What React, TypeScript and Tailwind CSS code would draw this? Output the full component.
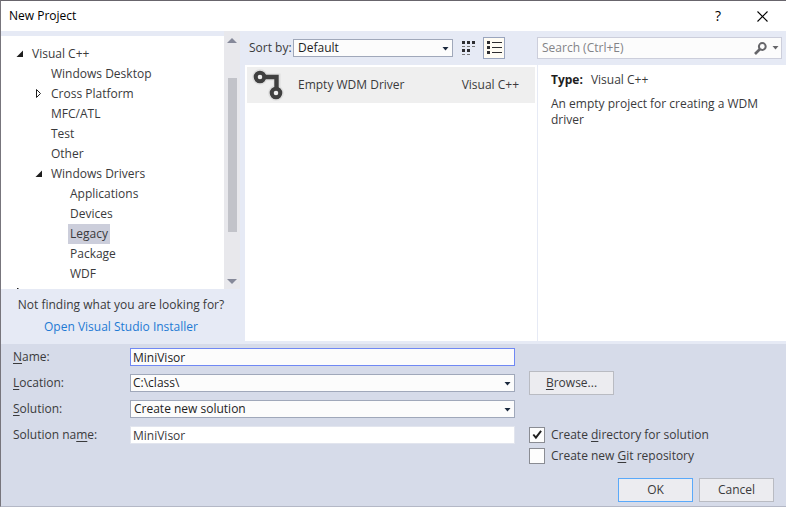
import React, { useState } from "react";

type Node = { label: string; depth: 0 | 1 | 2; state?: "open" | "closed" };

const nodes: Node[] = [
  { label: "Visual C++", depth: 0, state: "open" },
  { label: "Windows Desktop", depth: 1 },
  { label: "Cross Platform", depth: 1, state: "closed" },
  { label: "MFC/ATL", depth: 1 },
  { label: "Test", depth: 1 },
  { label: "Other", depth: 1 },
  { label: "Windows Drivers", depth: 1, state: "open" },
  { label: "Applications", depth: 2 },
  { label: "Devices", depth: 2 },
  { label: "Legacy", depth: 2 },
  { label: "Package", depth: 2 },
  { label: "WDF", depth: 2 },
];

const indent = { 0: "pl-[13px]", 1: "pl-8", 2: "pl-[51px]" };

function Expander({ state }: { state?: "open" | "closed" }) {
  return (
    <svg className="mr-1 h-3 w-3 shrink-0" viewBox="0 0 12 12" aria-hidden="true">
      {state === "open" && <path d="M9 2.5V9H2.5z" fill="#1e1e1e" />}
      {state === "closed" && (
        <path d="M3.5 1.5v8l4-4z" fill="#fff" stroke="#1e1e1e" strokeWidth="1" />
      )}
    </svg>
  );
}

function Caret({ className }: { className: string }) {
  return (
    <svg className={className} width="7" height="4" viewBox="0 0 7 4" aria-hidden="true">
      <path d="M0.5 0h6l-3 3.5z" fill="currentColor" />
    </svg>
  );
}

function Select({ id, options, label, pad }: { id: string; options: string[]; label?: string; pad: string }) {
  return (
    <div className="relative w-full">
      <select
        id={id}
        aria-label={label}
        className={`block h-[18px] w-full appearance-none border border-[#a0a8ba] bg-[#fcfcfc] pr-5 leading-4 text-[#1e1e1e] outline-none ${pad}`}
      >
        {options.map((o) => (
          <option key={o}>{o}</option>
        ))}
      </select>
      <Caret className="pointer-events-none absolute top-2 right-1 text-[#1b293e]" />
    </div>
  );
}

function Tree() {
  const [selected, setSelected] = useState("Legacy");
  return (
    <div className="flex h-[258px]">
      <ul role="tree" aria-label="Templates" className="mt-[5px] flex-1 overflow-hidden bg-white pt-2">
        {nodes.map((n) => (
          <li
            key={n.label}
            role="treeitem"
            aria-selected={n.label === selected}
            aria-expanded={n.state ? n.state === "open" : undefined}
            onClick={() => setSelected(n.label)}
            className={`flex h-5 items-center ${indent[n.depth]}`}
          >
            <Expander state={n.state} />
            <span className={`px-[2px] leading-5 ${n.label === selected ? "bg-[#cccedb]" : ""}`}>
              {n.label}
            </span>
          </li>
        ))}
        <li role="none" className="flex h-5 pt-1 pl-[13px]">
          <svg className="h-3 w-3" viewBox="0 0 12 12" aria-hidden="true">
            <path d="M3.5 0v8l4-4z" fill="#fff" stroke="#1e1e1e" />
          </svg>
        </li>
      </ul>
      <div className="flex w-4 flex-col items-center justify-between bg-[#e8e8ec] pt-[7px] pb-[5px]">
        <svg width="10" height="5" viewBox="0 0 10 5" aria-hidden="true">
          <path d="M0 5L5 0l5 5z" fill="#868999" />
        </svg>
        <div className="mt-[35px] mb-auto h-[154px] w-[9px] bg-[#c2c3c9]" />
        <svg width="10" height="5" viewBox="0 0 10 5" aria-hidden="true">
          <path d="M0 0h10L5 5z" fill="#868999" />
        </svg>
      </div>
    </div>
  );
}

function SmallIconsView() {
  const xs = [0, 5, 10];
  return (
    <svg width="14" height="15" viewBox="0 0 14 15" aria-hidden="true">
      {xs.map((x) => (
        <g key={x} fill="#2d2d30">
          <rect x={x} y="0" width="3" height="3" />
          <rect x={x} y="5" width="3" height="1" fill="#777" />
          {x < 10 && <rect x={x} y="8" width="3" height="3" />}
          {x < 10 && <rect x={x} y="13" width="3" height="1" fill="#777" />}
        </g>
      ))}
    </svg>
  );
}

function ListView() {
  return (
    <svg width="15" height="14" viewBox="0 0 15 14" aria-hidden="true">
      {[0, 5, 10].map((y) => (
        <g key={y} fill="#2d2d30">
          <rect x="0" y={y} width="3" height="3" />
          <rect x="5" y={y + 1} width="10" height="1" />
        </g>
      ))}
    </svg>
  );
}

function DriverIcon() {
  return (
    <svg width="32" height="32" viewBox="0 0 32 32" aria-hidden="true">
      <g fill="none" stroke="#dedede" strokeWidth="7">
        <path d="M10 8h15v12" />
        <circle cx="8" cy="8" r="4.3" />
        <circle cx="24" cy="24" r="4.3" />
      </g>
      <path d="M11 8h13.5v13" fill="none" stroke="#404040" strokeWidth="4.4" />
      <circle cx="8" cy="8" r="4.3" fill="#efefef" stroke="#404040" strokeWidth="4" />
      <circle cx="24" cy="24" r="4.3" fill="#efefef" stroke="#404040" strokeWidth="4" />
    </svg>
  );
}

function Key({ children }: { children: React.ReactNode }) {
  return <span className="underline underline-offset-2">{children}</span>;
}

const checkbox =
  "peer h-4 w-4 appearance-none border border-[#8a8c93] bg-[#fdfdfd] outline-none";

function CheckBox({ id, defaultChecked, children }: { id: string; defaultChecked?: boolean; children: React.ReactNode }) {
  return (
    <div className="flex items-center gap-[6px]">
      <span className="relative flex">
        <input id={id} type="checkbox" defaultChecked={defaultChecked} className={checkbox} />
        <svg
          className="pointer-events-none absolute top-0 left-0 hidden h-4 w-4 peer-checked:block"
          viewBox="0 0 16 16"
          aria-hidden="true"
        >
          <path d="M4.3 7.5l2.6 3.2 5.2-6.8" fill="none" stroke="#1e1e1e" strokeWidth="1.9" />
        </svg>
      </span>
      <label htmlFor={id}>{children}</label>
    </div>
  );
}

export default function App() {
  return (
    <div className="flex min-h-screen flex-col border-t border-b border-l border-t-[#68656c] border-b-[#b4b8c6] border-l-[#77757c] bg-[#d6dbe9] font-['Open_Sans','Noto_Sans',sans-serif] text-xs text-[#3a3a3c]">
      <header className="flex h-[30px] items-center bg-white pr-[18px] pl-2 text-black">
        <h1 className="flex-1">New Project</h1>
        <button type="button" aria-label="Help" className="mr-9 text-sm leading-4">
          ?
        </button>
        <button type="button" aria-label="Close">
          <svg width="11" height="11" viewBox="0 0 11 11" aria-hidden="true">
            <path d="M0.5 0.5l10 10M10.5 0.5l-10 10" stroke="#000" strokeWidth="1.1" />
          </svg>
        </button>
      </header>

      <main className="flex flex-1 bg-[#e6eaf5] pb-[3px]">
        <nav className="w-[244px] shrink-0">
          <div className="pr-[5px]">
            <Tree />
          </div>
          <div className="flex flex-col items-center pt-2 pr-1 leading-4">
            <p>Not finding what you are looking for?</p>
            <a href="#installer" className="mt-[6px] text-[#1e7ad4]">
              Open Visual Studio Installer
            </a>
          </div>
        </nav>

        <section className="flex min-w-0 flex-1 flex-col">
          <div className="flex h-[34px] items-center pl-1">
            <label htmlFor="sort" className="w-11 whitespace-nowrap">
              Sort by:
            </label>
            <div className="w-40">
              <Select id="sort" options={["Default"]} pad="pl-1" />
            </div>
            <button type="button" aria-label="Small icons" className="ml-1 flex h-[22px] w-6 items-center justify-center">
              <SmallIconsView />
            </button>
            <button
              type="button"
              aria-label="List"
              className="ml-[2px] flex h-[22px] w-[22px] items-center justify-center border border-[#9aa5bd] bg-[#fffcf4]"
            >
              <ListView />
            </button>
          </div>
          <div className="flex-1 bg-white px-[2px] pt-[2px]">
            <div className="flex h-9 items-center bg-[#efefef] pr-4 pl-[5px]">
              <DriverIcon />
              <span className="ml-[14px] flex-1">Empty WDM Driver</span>
              <span>Visual C++</span>
            </div>
          </div>
        </section>

        <aside className="flex w-[249px] shrink-0 flex-col">
          <div className="flex h-[34px] items-center pr-1">
            <div className="flex h-[22px] flex-1 items-center border border-[#cccedb] bg-[#fcfcfc] pr-[2px] pl-1">
              <input
                type="text"
                aria-label="Search"
                placeholder="Search (Ctrl+E)"
                className="min-w-0 flex-1 bg-transparent outline-none placeholder:text-[#838387]"
              />
              <svg width="13" height="13" viewBox="0 0 13 13" aria-hidden="true">
                <circle cx="8.3" cy="4.5" r="3.4" fill="none" stroke="#66666a" strokeWidth="2" />
                <path d="M6 7L1 12" stroke="#66666a" strokeWidth="2.6" />
              </svg>
              <Caret className="ml-[5px] text-[#66666a]" />
            </div>
          </div>
          <div className="flex-1 border-l border-[#e6eaf5] bg-white pt-[7px] pr-4 pl-[13px] leading-4">
            <p>
              <b className="mr-2 font-bold text-[#1e1e1e]">Type:</b>Visual C++
            </p>
            <p className="mt-2">An empty project for creating a WDM driver</p>
          </div>
        </aside>
      </main>

      <form onSubmit={(e) => e.preventDefault()} className="pr-3 pb-1 pl-3">
        <div className="grid auto-rows-[26px] grid-cols-[117px_385px_1fr] items-center">
          <label htmlFor="name">
            <Key>N</Key>ame:
          </label>
          <input
            id="name"
            type="text"
            defaultValue="MiniVisor"
            className="h-[18px] border border-[#7088f4] bg-[#fcfcfc] px-[2px] text-[#1e1e1e] outline-none"
          />
          <span />

          <label htmlFor="location">
            <Key>L</Key>ocation:
          </label>
          <Select id="location" options={["C:\\class\\"]} pad="pl-[2px]" />
          <button type="button" className="ml-[14px] h-6 w-[85px] border border-[#b9bbc2] bg-[#ececf0]">
            <Key>B</Key>rowse...
          </button>

          <label htmlFor="solution">
            <Key>S</Key>olution:
          </label>
          <Select id="solution" options={["Create new solution"]} pad="pl-[3px]" />
          <span />

          <label htmlFor="solution-name">
            Solution na<Key>m</Key>e:
          </label>
          <input
            id="solution-name"
            type="text"
            defaultValue="MiniVisor"
            className="h-[18px] border border-[#e2e5ee] bg-white px-[2px] outline-none"
          />
          <div className="ml-[14px]">
            <CheckBox id="directory" defaultChecked>
              Create <Key>d</Key>irectory for solution
            </CheckBox>
          </div>
        </div>
        <div className="ml-[516px]">
          <CheckBox id="git">
            Create new <Key>G</Key>it repository
          </CheckBox>
        </div>
        <div className="mt-[14px] flex justify-end gap-[6px]">
          <button type="submit" className="h-6 w-[75px] border border-[#5aa9fa] bg-[#ececf0]">
            OK
          </button>
          <button type="button" className="h-6 w-[75px] border border-[#b9bbc2] bg-[#ececf0]">
            Cancel
          </button>
        </div>
      </form>
    </div>
  );
}
